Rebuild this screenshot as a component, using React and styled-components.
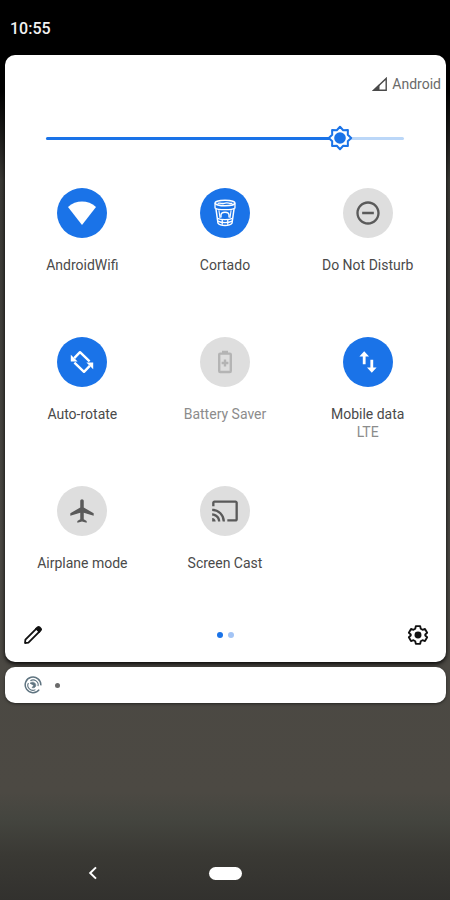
import React, { useState } from 'react'
import styled, { createGlobalStyle } from 'styled-components'
import { MdAirplanemodeActive, MdCast, MdRemoveCircleOutline } from 'react-icons/md'

const colors = {
  accent: '#1a73e8',
  accentLight: '#bbd7f8',
  tileOff: '#dedede',
  iconOff: '#5a5a5a',
  iconDisabled: '#b4b4b4',
  text: '#4a4a4a',
  textLight: '#8c8c8c'
}

const GlobalStyle = createGlobalStyle`
  * {
    box-sizing: border-box;
  }

  body {
    margin: 0;
    font-family: Roboto, sans-serif;
    background: #333230;
  }

  button {
    border: 0;
    padding: 0;
    background: none;
    font: inherit;
    cursor: pointer;
  }
`

const SignalIcon = () => (
  <svg width="15" height="14" viewBox="0 0 15 14" aria-hidden="true">
    <path d="M1.8 13.2 L14.2 1.4 V13.2 Z" fill="none" stroke="#4a4a4a" strokeWidth="1.4" />
    <path d="M0 14 L7.5 7 V14 Z" fill="#4a4a4a" />
  </svg>
)

const BrightnessIcon = () => (
  <svg width="26" height="26" viewBox="0 0 26 26" aria-hidden="true">
    <path
      d="M13 1.8 L16.2 5.2 L20.9 5.1 L20.8 9.8 L24.2 13 L20.8 16.2 L20.9 20.9 L16.2 20.8 L13 24.2 L9.8 20.8 L5.1 20.9 L5.2 16.2 L1.8 13 L5.2 9.8 L5.1 5.1 L9.8 5.2 Z"
      fill="#fff"
      stroke={colors.accent}
      strokeWidth="2"
      strokeLinejoin="round"
    />
    <circle cx="13" cy="13" r="5.8" fill={colors.accent} />
  </svg>
)

const WifiIcon = () => (
  <svg width="28" height="24" viewBox="0 0 28 24" aria-hidden="true">
    <path d="M14 24 L28 6 C24 2.4 19 0.6 14 0.6 C9 0.6 4 2.4 0 6 Z" fill="currentColor" />
  </svg>
)

const CupIcon = () => (
  <svg width="24" height="30" viewBox="0 0 26 30" fill="none" stroke="currentColor" aria-hidden="true">
    <ellipse cx="13" cy="4.2" rx="10.8" ry="3" strokeWidth="1.6" />
    <path d="M5 4.6 C8 3.2 10 5.6 13 4.4 C16 3.2 18 5.4 21 4.2" strokeWidth="1.4" />
    <path d="M2.2 4.5 V9.5 C5 12 21 12 23.8 9.5 V4.5" strokeWidth="1.4" />
    <path d="M3.2 10.5 L5.4 26 C8 29.4 18 29.4 20.6 26 L22.8 10.5" strokeWidth="1.6" />
    <path d="M6.4 12 L7.6 20.4 M19.6 12 L18.4 20.4" strokeWidth="1.2" />
    <path d="M8.6 20 V17.4 C8.6 13 17.4 13 17.4 17.4 V20" strokeWidth="1.6" />
    <path d="M4.8 20.8 C9 22.6 17 22.6 21.2 20.8 M5.4 23.8 C9 26 17 26 20.6 23.8" strokeWidth="1.5" />
    <path d="M10 22.4 V27.6 M16 22.4 V27.6" strokeWidth="1.4" />
  </svg>
)

const RotateIcon = () => (
  <svg width="24" height="24" viewBox="0 0 24 24" aria-hidden="true">
    <g fill="none" stroke="currentColor" strokeWidth="2.4" strokeLinejoin="round">
      <path d="M4.2 8.2 L10 2.2 L19.6 11.4" />
      <path d="M4.4 12.6 L14 21.8 L19.8 15.8" />
    </g>
    <path d="M0.8 4.8 V11.6 H7.6 Z M23.2 19.2 V12.4 H16.4 Z" fill="currentColor" />
  </svg>
)

const BatteryIcon = () => (
  <svg width="14" height="24" viewBox="0 0 14 24" aria-hidden="true">
    <rect x="1.2" y="3.6" width="11.6" height="18.4" rx="1" fill="none" stroke="currentColor" strokeWidth="2.4" />
    <path d="M4 0.8 H10 V4 H4 Z M5.8 9.4 H8.2 V11.8 H10.4 V14.2 H8.2 V16.6 H5.8 V14.2 H3.6 V11.8 H5.8 Z" fill="currentColor" />
  </svg>
)

const DataIcon = () => (
  <svg width="18" height="22" viewBox="0 0 18 22" aria-hidden="true">
    <path
      d="M5.2 0.2 L10 5.4 H6.6 V13.2 H3.8 V5.4 H0.4 Z M12.8 21.8 L8 16.6 H11.4 V8.8 H14.2 V16.6 H17.6 Z"
      fill="currentColor"
    />
  </svg>
)

const PencilIcon = () => (
  <svg width="20" height="20" viewBox="0 0 20 20" aria-hidden="true">
    <path
      d="M2 18 L2.4 14.6 L13.4 3.6 L16.4 6.6 L5.4 17.6 Z"
      fill="none"
      stroke="#111"
      strokeWidth="1.8"
      strokeLinejoin="round"
    />
    <path
      d="M12 3.6 L14.2 1.6 C15.2 0.7 16.2 0.8 17 1.6 L18.4 3 C19.2 3.8 19.3 4.8 18.4 5.8 L16.4 8 Z"
      fill="#111"
    />
  </svg>
)

const GearIcon = () => (
  <svg width="22" height="22" viewBox="0 0 24 24" aria-hidden="true">
    <path
      d="M9.6 2.4 H14.4 L15 5.2 L16.9 6.3 L19.6 5.4 L22 9.6 L19.9 11.4 V12.6 L22 14.4 L19.6 18.6 L16.9 17.7 L15 18.8 L14.4 21.6 H9.6 L9 18.8 L7.1 17.7 L4.4 18.6 L2 14.4 L4.1 12.6 V11.4 L2 9.6 L4.4 5.4 L7.1 6.3 L9 5.2 Z"
      fill="none"
      stroke="#111"
      strokeWidth="2"
      strokeLinejoin="round"
    />
    <circle cx="12" cy="12" r="3.8" fill="#111" />
  </svg>
)

const SwirlIcon = () => (
  <svg width="18" height="18" viewBox="0 0 18 18" fill="none" stroke="#5f7480" aria-hidden="true">
    <path d="M15.2 13.6 A7.8 7.8 0 1 1 16.8 9.4 M13.4 15.4 A7.8 7.8 0 0 1 11.6 16.3" strokeWidth="1.5" />
    <path d="M11.4 13.6 A5 5 0 0 1 4.4 7 M6.4 4.8 A5 5 0 0 1 14 10.2" strokeWidth="1.1" />
    <path d="M6 7.2 C8.2 5 12 6.4 11.8 9.4 C11.6 11.4 9.8 12.2 8 11.6 L9.6 9.8 C9 8.4 7.6 8.2 6 7.2 Z" fill="#5f7480" strokeWidth="0.6" />
  </svg>
)

const ChevronIcon = () => (
  <svg width="10" height="14" viewBox="0 0 10 14" aria-hidden="true">
    <path d="M8 1.4 L2.2 7 L8 12.6" fill="none" stroke="#fff" strokeWidth="2" />
  </svg>
)

const tiles = [
  { label: 'AndroidWifi', state: 'on', icon: <WifiIcon /> },
  { label: 'Cortado', state: 'on', icon: <CupIcon /> },
  { label: 'Do Not Disturb', state: 'off', icon: <MdRemoveCircleOutline size={28} /> },
  { label: 'Auto-rotate', state: 'on', icon: <RotateIcon /> },
  { label: 'Battery Saver', state: 'disabled', icon: <BatteryIcon /> },
  { label: 'Mobile data', detail: 'LTE', state: 'on', icon: <DataIcon /> },
  { label: 'Airplane mode', state: 'off', icon: <MdAirplanemodeActive size={28} /> },
  { label: 'Screen Cast', state: 'off', icon: <MdCast size={28} /> }
]

/**
 * @description - single quick settings toggle
 * @prop {string} label - name under the circle
 * @prop {string} detail - optional second line
 * @prop {string} state - on, off or disabled
 * @prop {node} icon - icon inside the circle
 */
function Tile ({ label, detail, state, icon }) {
  return (
    <Tile.Button type="button" disabled={state === 'disabled'} aria-pressed={state === 'on'}>
      <Tile.Circle $state={state}>{icon}</Tile.Circle>
      <Tile.Label $state={state}>{label}</Tile.Label>
      {detail && <Tile.Detail>{detail}</Tile.Detail>}
    </Tile.Button>
  )
}

function BrightnessSlider () {
  const [level, setLevel] = useState(82)
  return (
    <BrightnessSlider.Container>
      <BrightnessSlider.Track>
        <BrightnessSlider.Fill style={{ width: `${level}%` }} />
      </BrightnessSlider.Track>
      <BrightnessSlider.Thumb style={{ left: `${level}%` }}>
        <BrightnessIcon />
      </BrightnessSlider.Thumb>
      <BrightnessSlider.Input
        type="range"
        min="0"
        max="100"
        value={level}
        aria-label="Brightness"
        onChange={event => setLevel(Number(event.target.value))}
      />
    </BrightnessSlider.Container>
  )
}

function App () {
  return (
    <Screen>
      <GlobalStyle />
      <StatusBar>10:55</StatusBar>
      <Panel>
        <Carrier>
          <SignalIcon />
          <span>Android</span>
        </Carrier>
        <BrightnessSlider />
        <TileGrid>
          {tiles.map(tile => <Tile key={tile.label} {...tile} />)}
        </TileGrid>
        <PanelFooter>
          <IconButton type="button" aria-label="Edit">
            <PencilIcon />
          </IconButton>
          <Pages>
            <PageDot $active />
            <PageDot />
          </Pages>
          <IconButton type="button" aria-label="Settings">
            <GearIcon />
          </IconButton>
        </PanelFooter>
      </Panel>
      <NotificationBar>
        <SwirlIcon />
        <MoreDot />
      </NotificationBar>
      <NavBar>
        <NavButton type="button" aria-label="Back">
          <ChevronIcon />
        </NavButton>
        <NavButton type="button" aria-label="Home">
          <HomePill />
        </NavButton>
      </NavBar>
    </Screen>
  )
}

export default App

const Screen = styled.main`
  display: flex;
  flex-direction: column;
  min-height: 100vh;
  background: linear-gradient(
    #000 0%,
    #000 10%,
    #3a3935 20%,
    #4a4843 60%,
    #4c4943 88%,
    #44453f 91%,
    #3a3934 95%,
    #32312e 100%
  );
`

const StatusBar = styled.header`
  height: 55px;
  padding: 0 10px;
  color: #f2f2f2;
  font-size: 16px;
  font-weight: 500;
  line-height: 58px;
`

const Panel = styled.section`
  margin: 0 4px 0 5px;
  border-radius: 10px;
  background: #fff;
  box-shadow: 0 2px 4px rgba(0, 0, 0, 0.9);
`

const Carrier = styled.div`
  display: flex;
  align-items: center;
  justify-content: flex-end;
  gap: 5px;
  height: 58px;
  padding-right: 5px;
  color: #6a6a6a;
  font-size: 14px;
`

BrightnessSlider.Container = styled.div`
  position: relative;
  display: flex;
  align-items: center;
  height: 50px;
  margin: 0 42px 0 41px;
`

BrightnessSlider.Track = styled.div`
  flex: 1;
  height: 3px;
  border-radius: 2px;
  background: ${colors.accentLight};
`

BrightnessSlider.Fill = styled.div`
  height: 100%;
  border-radius: 2px;
  background: ${colors.accent};
`

BrightnessSlider.Thumb = styled.span`
  position: absolute;
  top: 50%;
  display: flex;
  transform: translate(-50%, -50%);
`

BrightnessSlider.Input = styled.input`
  position: absolute;
  inset: 0;
  width: 100%;
  height: 100%;
  margin: 0;
  opacity: 0;
  cursor: pointer;
`

const TileGrid = styled.div`
  display: grid;
  grid-template-columns: repeat(3, 1fr);
  row-gap: 45px;
  padding: 25px 7px 18px 6px;
`

Tile.Button = styled.button`
  display: flex;
  flex-direction: column;
  align-items: center;
  min-height: 104px;
`

Tile.Circle = styled.span`
  display: flex;
  align-items: center;
  justify-content: center;
  width: 50px;
  height: 50px;
  margin-bottom: 18px;
  border-radius: 50%;
  background: ${({ $state }) => $state === 'on' ? colors.accent : colors.tileOff};
  color: ${({ $state }) => ({ on: '#fff', off: colors.iconOff, disabled: colors.iconDisabled })[$state]};
`

Tile.Label = styled.span`
  color: ${({ $state }) => $state === 'disabled' ? colors.textLight : colors.text};
  font-size: 14px;
  line-height: 18px;
`

Tile.Detail = styled.span`
  color: ${colors.textLight};
  font-size: 14px;
  line-height: 18px;
`

const PanelFooter = styled.footer`
  display: flex;
  align-items: center;
  justify-content: space-between;
  height: 54px;
  padding: 0 17px;
`

const IconButton = styled.button`
  display: flex;
  justify-content: center;
  width: 22px;
`

const Pages = styled.div`
  display: flex;
  gap: 5px;
`

const PageDot = styled.span`
  width: 6px;
  height: 6px;
  border-radius: 50%;
  background: ${({ $active }) => $active ? colors.accent : '#a3c4f5'};
`

const NotificationBar = styled.section`
  display: flex;
  align-items: center;
  gap: 13px;
  height: 36px;
  margin: 5px 4px 0 5px;
  padding: 0 19px;
  border-radius: 10px;
  background: #fff;
  box-shadow: 0 1px 3px rgba(0, 0, 0, 0.5);
`

const MoreDot = styled.span`
  width: 5px;
  height: 5px;
  border-radius: 50%;
  background: #6a6a6a;
`

const NavBar = styled.nav`
  display: grid;
  grid-template-columns: repeat(3, 1fr);
  height: 54px;
  margin-top: auto;
  padding: 0 27px;
`

const NavButton = styled.button`
  display: flex;
  align-items: center;
  justify-content: center;
`

const HomePill = styled.span`
  width: 33px;
  height: 13px;
  border-radius: 7px;
  background: #fff;
`
